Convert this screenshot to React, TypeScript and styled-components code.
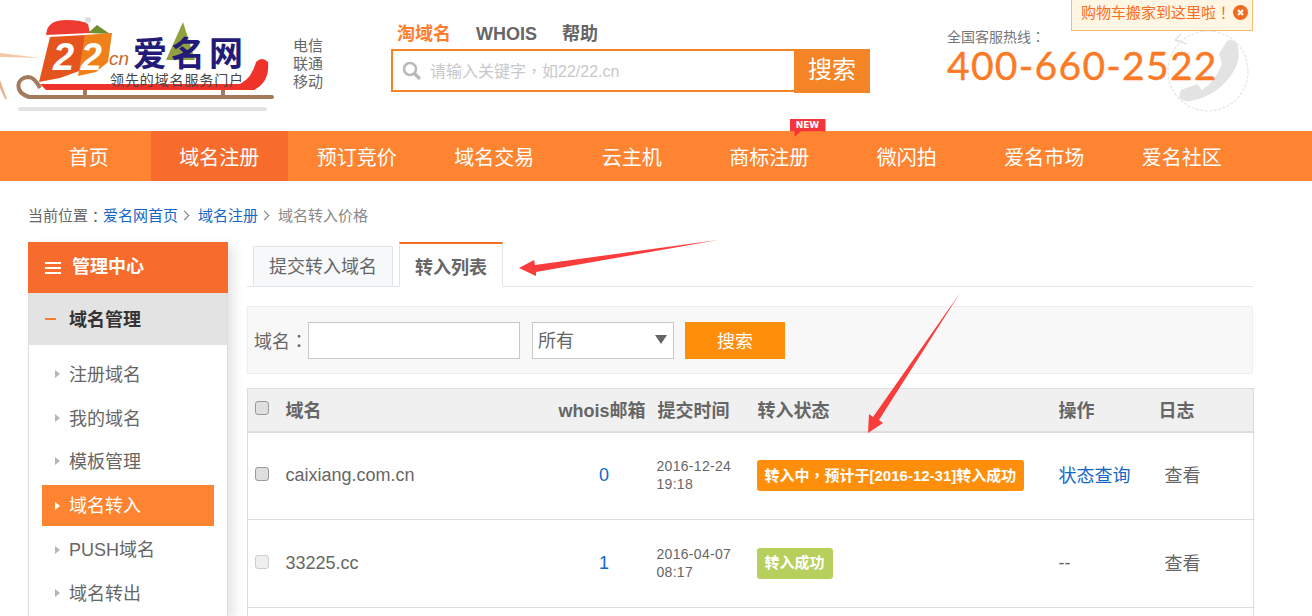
import styled, { createGlobalStyle } from 'styled-components';

const GlobalStyle = createGlobalStyle`
    html, body {
        margin: 0;
        padding: 0;
        height: 616px;
        overflow: hidden;
        background: #ffffff;
    }
    body {
        font-family: "Liberation Sans", "Noto Sans CJK SC", sans-serif;
        line-height: 1.3;
        color: #666666;
    }
    a {
        text-decoration: none;
    }
`;

const Page = styled.div`
    position: relative;
    width: 1312px;
    height: 616px;
    overflow: hidden;
`;

// centered full-width punctuation, as in the reference
const Punct = styled.span`
    font-family: "Noto Sans CJK TC", sans-serif;
`;

const Header = styled.header`
    position: relative;
    display: flex;
    height: 131px;
`;

const LogoBox = styled.div`
    width: 293px;
    flex-shrink: 0;
`;

const Carriers = styled.div`
    width: 30px;
    padding-top: 37px;
    font-size: 15px;
    line-height: 18px;
    color: #666666;
`;

const SearchArea = styled.div`
    width: 479px;
    margin-left: 68px;
    padding-top: 21px;
`;

const SearchTabs = styled.div`
    display: flex;
    gap: 25px;
    height: 28px;
    padding-left: 6px;
    line-height: 26px;
    font-size: 18px;
    font-weight: bold;
`;

const SearchTab = styled.span<{ $active?: boolean }>`
    color: ${({ $active }) => ($active ? '#ff7d2e' : '#666666')};
`;

const SearchBar = styled.div`
    display: flex;
    height: 44px;
`;

const SearchField = styled.div`
    display: flex;
    align-items: center;
    gap: 8px;
    box-sizing: border-box;
    width: 403px;
    height: 43px;
    padding-left: 9px;
    border: 2px solid #f58426;
    border-right: none;
    font-size: 16px;
    color: #c8c8c8;
`;

const Placeholder = styled.span`
    padding-top: 2px;
`;

const SearchButton = styled.div`
    width: 76px;
    line-height: 42px;
    text-align: center;
    font-size: 24px;
    color: #ffffff;
    background: #f58426;
`;

const Hotline = styled.div`
    position: relative;
    margin-left: 77px;
    padding-top: 27px;
    width: 300px;
`;

const HotlineLabel = styled.div`
    font-size: 14px;
    line-height: 18px;
    color: #777777;
`;

const HotlineNumber = styled.div`
    position: relative;
    margin-top: 1px;
    font-family: "Lato", "Liberation Sans", sans-serif;
    font-size: 39px;
    line-height: 36px;
    letter-spacing: 1.3px;
    color: #fb7a26;
    -webkit-text-stroke: 0.4px #fb7a26;
`;

const PhoneMark = styled.svg`
    position: absolute;
    left: 220px;
    top: 30px;
`;

const CartNotice = styled.div`
    position: absolute;
    top: 0;
    left: 1071px;
    display: flex;
    align-items: center;
    gap: 2px;
    box-sizing: border-box;
    width: 182px;
    height: 31px;
    padding: 0 0 6px 9px;
    font-size: 15px;
    color: #fb6c22;
    background: #fff6e4;
    border: 1px solid #f4bb72;
    border-top: none;
`;

const Nav = styled.nav`
    display: flex;
    height: 50px;
    padding-left: 27px;
    background: #ff8431;
`;

const NavItem = styled.a<{ $active?: boolean; $first?: boolean }>`
    position: relative;
    width: ${({ $first }) => ($first ? '123.5px' : '137.5px')};
    line-height: 54px;
    text-align: center;
    font-size: 20px;
    color: #ffffff;
    background: ${({ $active }) => ($active ? '#f76c2d' : 'transparent')};
`;

const NewBadge = styled.span`
    position: absolute;
    top: -12px;
    left: 89px;
    width: 36px;
    height: 18px;
    line-height: 12px;
    font-family: "DejaVu Sans", sans-serif;
    font-size: 9px;
    font-weight: bold;
    text-align: center;
    color: #ffffff;
    background: #f5343c;
    clip-path: polygon(0 0, 100% 0, 100% 68%, 32% 68%, 14% 100%, 14% 68%, 0 68%);
`;

const Crumbs = styled.div`
    display: flex;
    align-items: center;
    box-sizing: border-box;
    height: 61px;
    padding: 8px 0 0 28px;
    font-size: 15px;
    color: #666666;
`;

const CrumbLink = styled.a`
    color: #1266c8;
`;

const CrumbArrow = styled.span`
    width: 6px;
    height: 6px;
    margin: 0 10px 0 3px;
    border-top: 1px solid #777777;
    border-right: 1px solid #777777;
    transform: rotate(45deg);
`;

const CrumbCurrent = styled.span`
    color: #888888;
`;

const Body = styled.div`
    display: flex;
    gap: 19px;
    padding-left: 28px;
`;

const Sidebar = styled.aside`
    width: 200px;
    height: 374px;
    flex-shrink: 0;
    box-shadow: 6px 4px 10px rgba(0, 0, 0, 0.1);
`;

const SideTitle = styled.div`
    display: flex;
    align-items: center;
    gap: 11px;
    box-sizing: border-box;
    height: 51px;
    padding: 1px 0 0 17px;
    font-size: 18px;
    font-weight: bold;
    color: #ffffff;
    background: #f76c2d;
`;

const Burger = styled.span`
    display: block;
    width: 16px;
    height: 12px;
    border-top: 2px solid #ffffff;
    border-bottom: 2px solid #ffffff;
    box-sizing: border-box;
    position: relative;

    &::after {
        content: '';
        position: absolute;
        left: 0;
        right: 0;
        top: 3px;
        height: 2px;
        background: #ffffff;
    }
`;

const SideGroup = styled.div`
    display: flex;
    align-items: center;
    gap: 13px;
    box-sizing: border-box;
    height: 52px;
    padding: 3px 0 0 16px;
    font-size: 18px;
    font-weight: bold;
    color: #333333;
    background: #e3e3e3;
    border: 1px solid #dddddd;
    border-width: 0 1px;
`;

const Minus = styled.span`
    width: 11px;
    height: 2px;
    margin-top: -3px;
    background: #fb7d30;
`;

const SideList = styled.div`
    box-sizing: border-box;
    height: 271px;
    padding: 7px 13px 0;
    background: #ffffff;
    border: 1px solid #dddddd;
    border-width: 0 1px;
`;

const SideItem = styled.a<{ $active?: boolean }>`
    display: flex;
    align-items: center;
    gap: 9px;
    box-sizing: border-box;
    height: ${({ $active }) => ($active ? '41px' : '43.5px')};
    margin: ${({ $active }) => ($active ? '2.5px 0 1.25px' : '0')};
    padding: ${({ $active }) => ($active ? '3px' : '4px')} 0 0 13px;
    font-size: 18px;
    color: ${({ $active }) => ($active ? '#ffffff' : '#666666')};
    background: ${({ $active }) => ($active ? '#ff8431' : 'transparent')};

    &::before {
        content: '';
        margin-top: -3px;
        border-left: 5px solid ${({ $active }) => ($active ? '#ffffff' : '#b5b5b5')};
        border-top: 4px solid transparent;
        border-bottom: 4px solid transparent;
    }
`;

const Main = styled.main`
    width: 1006px;
`;

const Tabs = styled.div`
    display: flex;
    align-items: flex-end;
    gap: 6px;
    height: 45px;
    padding-left: 6px;
    border-bottom: 1px solid #e1e5ea;
    box-sizing: border-box;
`;

const Tab = styled.div<{ $active?: boolean }>`
    box-sizing: border-box;
    height: ${({ $active }) => ($active ? '45px' : '40px')};
    margin-bottom: ${({ $active }) => ($active ? '-1px' : '0')};
    padding: 0 15px;
    line-height: ${({ $active }) => ($active ? '49px' : '41px')};
    font-size: 18px;
    font-weight: ${({ $active }) => ($active ? 'bold' : 'normal')};
    color: #666666;
    background: ${({ $active }) => ($active ? '#ffffff' : '#f7f8f9')};
    border: 1px solid #e1e5ea;
    border-bottom: ${({ $active }) => ($active ? '1px solid #ffffff' : 'none')};
    border-top: ${({ $active }) => ($active ? '2px solid #f0701f' : '1px solid #e1e5ea')};
`;

const Filter = styled.div`
    display: flex;
    align-items: center;
    box-sizing: border-box;
    height: 68px;
    margin-top: 19px;
    padding: 0 0 0 6px;
    font-size: 18px;
    background: #f8f8f8;
    border: 1px solid #eeeeee;
`;

const FilterLabel = styled.label`
    margin-top: 4px;
`;

const FilterInput = styled.input`
    box-sizing: border-box;
    width: 212px;
    height: 37px;
    border: 1px solid #c8c8c8;
    background: #ffffff;
    outline: none;
`;

const SelectWrap = styled.div`
    position: relative;
    margin-left: 12px;

    &::after {
        content: '';
        position: absolute;
        right: 7px;
        top: 13px;
        border-top: 9px solid #666666;
        border-left: 6px solid transparent;
        border-right: 6px solid transparent;
    }
`;

const FilterSelect = styled.select`
    display: block;
    box-sizing: border-box;
    width: 142px;
    height: 37px;
    padding: 3px 0 0 5px;
    font: inherit;
    color: #666666;
    background: #ffffff;
    border: 1px solid #c8c8c8;
    border-radius: 0;
    appearance: none;
    outline: none;
`;

const FilterButton = styled.div`
    width: 100px;
    height: 37px;
    margin-left: 11px;
    line-height: 40px;
    text-align: center;
    color: #ffffff;
    background: #ff8e0a;
`;

const Table = styled.table`
    width: 1006px;
    margin-top: 14px;
    table-layout: fixed;
    border-collapse: collapse;
    border: 1px solid #dddddd;
`;

const HeadRow = styled.tr`
    height: 43px;
    background: #f0f0f0;
    border-bottom: 2px solid #dddddd;
`;

const Th = styled.th<{ $pad?: number }>`
    padding: 3px 0 0 ${({ $pad }) => $pad ?? 6}px;
    text-align: left;
    font-size: 18px;
    font-weight: bold;
    color: #666666;
    white-space: nowrap;
`;

const CheckTh = styled.th`
    padding: 0 0 3px 7px;
`;

const Row = styled.tr`
    height: 88px;
    border-bottom: 1px solid #dddddd;
`;

const Td = styled.td<{ $pad?: number; $center?: boolean; $cjk?: boolean }>`
    padding: ${({ $cjk }) => ($cjk ? '2px' : '0')} 0 0 ${({ $pad }) => $pad ?? 6}px;
    text-align: ${({ $center }) => ($center ? 'center' : 'left')};
    font-size: 18px;
    color: #666666;
    white-space: nowrap;
`;

const CheckTd = styled.td`
    padding: 0 0 3px 7px;
`;

const DateText = styled.div`
    font-size: 14px;
    line-height: 18px;
    letter-spacing: 0.3px;
    margin-top: -2px;
`;

const Check = styled.input`
    display: block;
    box-sizing: border-box;
    width: 14px;
    height: 14px;
    margin: 0;
    appearance: none;
    border: 1px solid ${({ disabled }) => (disabled ? '#cfcfcf' : '#9a9a9a')};
    border-radius: 3px;
    background: ${({ disabled }) => (disabled ? '#eeeeee' : '#dfdfdf')};
`;

const CountLink = styled.a`
    color: #1266c8;
`;

const Badge = styled.span<{ $done?: boolean }>`
    display: inline-block;
    height: 31px;
    margin-left: -1px;
    padding: 0 8px;
    line-height: 30px;
    font-size: 15px;
    font-weight: bold;
    color: #ffffff;
    border-radius: 3px;
    background: ${({ $done }) => ($done ? '#b7cf5d' : '#ff8e0a')};
`;

const OverlayArrow = styled.svg`
    position: absolute;
    left: 0;
    top: 0;
    pointer-events: none;
`;

function Logo() {
    return (
        <svg width="285" height="131" viewBox="0 0 285 131">
            <path d="M0 53 L40 58 L0 57 Z" fill="#f6c9a6" />
            <path d="M0 80 L7 99 L5 99 L0 88 Z" fill="#e9b18c" />
            <rect x="18" y="107" width="249" height="4" rx="2" fill="#e2e4e4" />
            <path d="M272 97 H29" stroke="#a27a5c" strokeWidth="4" strokeLinecap="round" />
            <path d="M29 97 C 14 92 16 78 28 77 C 34 77 38 84 40 88" fill="none" stroke="#a27a5c" strokeWidth="4" />
            <path d="M85 90 V97 M223 90 V97" stroke="#a27a5c" strokeWidth="4" />
            <path d="M40 84 H240 Q252 78 256 62 Q262 56 268 62 Q270 82 254 90 H46 Z" fill="#f0332a" />
            <path d="M88 33 L97 25 L110 34 Z" fill="#6e8f2d" />
            <path d="M183 22 L195 60 L166 60 Z" fill="#8fa23f" />
            <path d="M50 37 L85 35 L82 70 L60 78 L39 82 Z" fill="#e4541c" />
            <path d="M85 35 L112 33 L108 62 L96 72 L78 76 Z" fill="#f0801a" />
            <path d="M47 30 Q50 20 66 20 Q82 20 88 24 L90 33 L46 35 Z" fill="#ee3b32" />
            <circle cx="88" cy="20" r="3" fill="#dddddd" />
            <text x="53" y="70" fontFamily="Liberation Sans, sans-serif" fontSize="38" fontWeight="bold" fontStyle="italic" fill="#ffffff" textLength="49">22</text>
            <text x="109" y="65" fontFamily="Liberation Sans, sans-serif" fontSize="19" fontStyle="italic" fill="#c9651e">cn</text>
            <text x="133" y="66" fontFamily="Noto Sans CJK SC, sans-serif" fontSize="34" fontWeight="bold" fill="#241a78" textLength="110">爱名网</text>
            <text x="110" y="85" fontFamily="Noto Sans CJK SC, sans-serif" fontSize="14" fill="#444444" textLength="133">领先的域名服务门户</text>
        </svg>
    );
}

export default function App() {
    const navItems = ['首页', '域名注册', '预订竞价', '域名交易', '云主机', '商标注册', '微闪拍', '爱名市场', '爱名社区'];
    const sideItems = ['注册域名', '我的域名', '模板管理', '域名转入', 'PUSH域名', '域名转出'];

    return (
        <Page>
            <GlobalStyle />
            <Header>
                <LogoBox>
                    <Logo />
                </LogoBox>
                <Carriers>电信 联通 移动</Carriers>
                <SearchArea>
                    <SearchTabs>
                        <SearchTab $active>淘域名</SearchTab>
                        <SearchTab>WHOIS</SearchTab>
                        <SearchTab>帮助</SearchTab>
                    </SearchTabs>
                    <SearchBar>
                        <SearchField>
                            <svg width="20" height="20" viewBox="0 0 20 20">
                                <circle cx="8" cy="8" r="6" fill="none" stroke="#b9b9b9" strokeWidth="2.5" />
                                <path d="M12.5 12.5 L18 18" stroke="#b9b9b9" strokeWidth="3.2" />
                            </svg>
                            <Placeholder>请输入关键字<Punct>，</Punct>如22/22.cn</Placeholder>
                        </SearchField>
                        <SearchButton>搜索</SearchButton>
                    </SearchBar>
                </SearchArea>
                <Hotline>
                    <PhoneMark width="84" height="84" viewBox="0 0 84 84">
                        <circle cx="41" cy="41" r="40" fill="none" stroke="#e6e6e6" strokeWidth="1.2" strokeDasharray="3 1.5" />
                        <path d="M52 24 L60 11 Q66 8 70 14 Q76 30 62 48 Q48 66 24 71 Q15 72 12 67 L14 60 L30 54 L35 60 Q48 52 55 34 Z" fill="#e3e3e3" />
                        <path d="M8 10 L14 4 M8 10 L15 12 M8 10 L20 14" fill="none" stroke="#e3e3e3" strokeWidth="1.5" />
                    </PhoneMark>
                    <HotlineLabel>全国客服热线<Punct>：</Punct></HotlineLabel>
                    <HotlineNumber>400-660-2522</HotlineNumber>
                </Hotline>
                <CartNotice>
                    <span>购物车搬家到这里啦<Punct>！</Punct></span>
                    <svg width="15" height="15" viewBox="0 0 15 15">
                        <circle cx="7.5" cy="7.5" r="7.5" fill="#f26a1e" />
                        <path d="M5 5 L10 10 M10 5 L5 10" stroke="#ffffff" strokeWidth="2" />
                    </svg>
                </CartNotice>
            </Header>
            <Nav>
                {navItems.map((item, index) => (
                    <NavItem key={item} $first={index === 0} $active={item === '域名注册'}>
                        {item}
                        {item === '商标注册' && <NewBadge>NEW</NewBadge>}
                    </NavItem>
                ))}
            </Nav>
            <Crumbs>
                当前位置<Punct>：</Punct><CrumbLink>爱名网首页</CrumbLink>
                <CrumbArrow />
                <CrumbLink>域名注册</CrumbLink>
                <CrumbArrow />
                <CrumbCurrent>域名转入价格</CrumbCurrent>
            </Crumbs>
            <Body>
                <Sidebar>
                    <SideTitle>
                        <Burger />
                        管理中心
                    </SideTitle>
                    <SideGroup>
                        <Minus />
                        域名管理
                    </SideGroup>
                    <SideList>
                        {sideItems.map((item) => (
                            <SideItem key={item} $active={item === '域名转入'}>{item}</SideItem>
                        ))}
                    </SideList>
                </Sidebar>
                <Main>
                    <Tabs>
                        <Tab>提交转入域名</Tab>
                        <Tab $active>转入列表</Tab>
                    </Tabs>
                    <Filter>
                        <FilterLabel>域名<Punct>：</Punct></FilterLabel>
                        <FilterInput />
                        <SelectWrap>
                            <FilterSelect defaultValue="all">
                                <option value="all">所有</option>
                            </FilterSelect>
                        </SelectWrap>
                        <FilterButton>搜索</FilterButton>
                    </Filter>
                    <Table>
                        <colgroup>
                            <col style={{ width: 31 }} />
                            <col style={{ width: 273 }} />
                            <col style={{ width: 100 }} />
                            <col style={{ width: 100 }} />
                            <col style={{ width: 301 }} />
                            <col style={{ width: 100 }} />
                            <col style={{ width: 101 }} />
                        </colgroup>
                        <thead>
                            <HeadRow>
                                <CheckTh><Check type="checkbox" /></CheckTh>
                                <Th $pad={7}>域名</Th>
                                <Th $pad={7}>whois邮箱</Th>
                                <Th>提交时间</Th>
                                <Th>转入状态</Th>
                                <Th>操作</Th>
                                <Th>日志</Th>
                            </HeadRow>
                        </thead>
                        <tbody>
                            <Row>
                                <CheckTd><Check type="checkbox" /></CheckTd>
                                <Td $pad={7}>caixiang.com.cn</Td>
                                <Td $pad={5} $center><CountLink>0</CountLink></Td>
                                <Td $pad={5}><DateText>2016-12-24<br />19:18</DateText></Td>
                                <Td><Badge>转入中<Punct>，</Punct>预计于[2016-12-31]转入成功</Badge></Td>
                                <Td $cjk><CountLink>状态查询</CountLink></Td>
                                <Td $cjk $pad={12}>查看</Td>
                            </Row>
                            <Row>
                                <CheckTd><Check type="checkbox" disabled /></CheckTd>
                                <Td $pad={7}>33225.cc</Td>
                                <Td $pad={5} $center><CountLink>1</CountLink></Td>
                                <Td $pad={5}><DateText>2016-04-07<br />08:17</DateText></Td>
                                <Td><Badge $done>转入成功</Badge></Td>
                                <Td>--</Td>
                                <Td $cjk $pad={12}>查看</Td>
                            </Row>
                            <Row>
                                <Td colSpan={7} />
                            </Row>
                        </tbody>
                    </Table>
                </Main>
            </Body>
            <OverlayArrow width="1312" height="616" viewBox="0 0 1312 616">
                <path d="M718 240 L536 272 L536 276 L519 268 L534 260 L535 265 Z" fill="#f93c3c" />
                <path d="M960 293 L879 420 L883 423 L868 433 L869 414 L873 417 Z" fill="#f93c3c" />
            </OverlayArrow>
        </Page>
    );
}
